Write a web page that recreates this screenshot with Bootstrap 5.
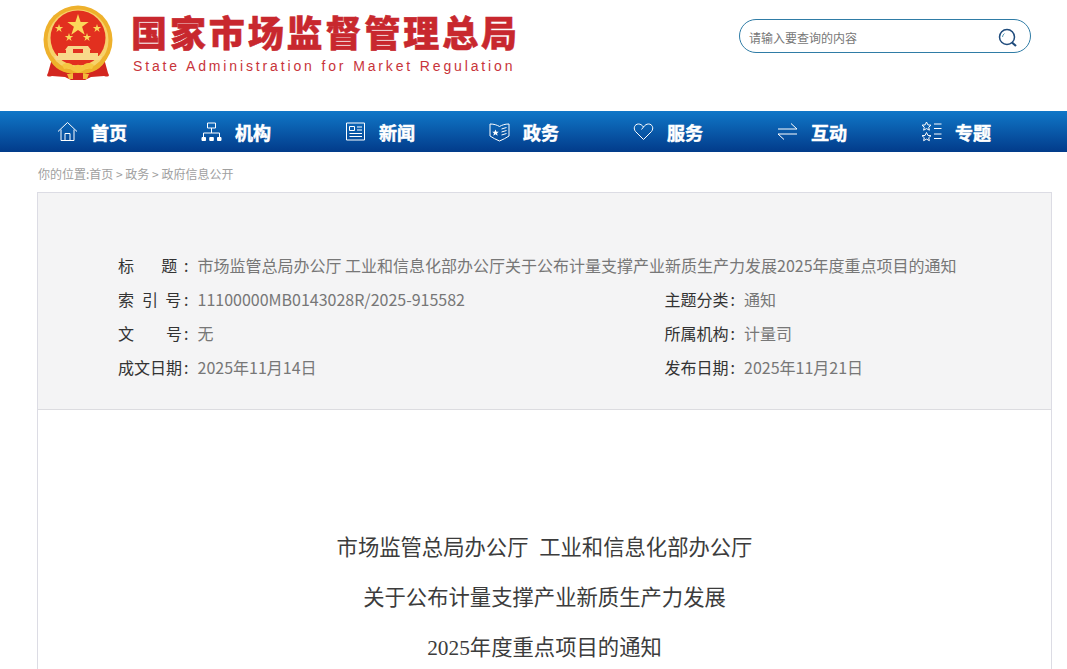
<!DOCTYPE html>
<html lang="zh-CN">
<head>
<meta charset="UTF-8">
<meta name="viewport" content="width=device-width, initial-scale=1.0">
<title>市场监管总局办公厅 工业和信息化部办公厅关于公布计量支撑产业新质生产力发展2025年度重点项目的通知</title>
<link href="https://cdn.jsdelivr.net/npm/bootstrap@5.3.3/dist/css/bootstrap.min.css" rel="stylesheet">
<style>
body { font-family: "Noto Sans CJK SC", "Noto Sans", sans-serif; color: #333; background: #fff; }
.site-head { height: 111px; padding-left: 43px; padding-right: 36px; }
.emblem { width: 70px; height: 76px; margin-top: 5px; flex: none; }
.brand { margin-left: 18px; margin-top: 8px; }
.brand-cn { font-size: 36px; line-height: 46px; font-weight: 900; color: #c8282e; letter-spacing: 2.9px; white-space: nowrap; -webkit-text-stroke: .5px #c8282e; }
.brand-en { font-family: "Liberation Sans", sans-serif; font-size: 14px; line-height: 18px; color: #c8343a; letter-spacing: 2.86px; margin-top: 3px; margin-left: 2px; white-space: nowrap; }
.search-box { width: 292px; height: 34px; margin-top: 19px; border: 1px solid #2f7ca6; border-radius: 17px; padding: 3px 12px 0 10px; }
.search-box input { border: 0; outline: 0; background: transparent; font-size: 12px; color: #777; flex: 1; min-width: 0; padding: 0; margin-left: -1px; }
.search-box input::placeholder { color: #777; opacity: 1; }
.main-nav { height: 41px; padding-left: 34px; background: linear-gradient(#1077c8, #023b8a); }
.main-nav a { width: 144px; padding-left: 23px; padding-top: 2px; color: #fff; font-size: 18px; font-weight: 700; text-decoration: none; gap: 13px; -webkit-text-stroke: .5px #fff; }
.main-nav svg { width: 21px; height: 21px; flex: none; fill: none; stroke: #fff; stroke-width: 1; margin-top: -2px; }
.crumb { height: 40px; padding-left: 38px; font-size: 12px; line-height: 44px; color: #a0a0a0; }
.doc-panel { margin: 0 15px 0 37px; border: 1px solid #dcdce4; border-bottom: 0; min-height: 520px; }
.meta-box { background: #f4f4f5; border-bottom: 1px solid #dcdce0; padding: 55px 80px 25px; }
.meta-line { line-height: 34px; font-size: 16px; color: #777; }
.meta-cell { display: flex; white-space: nowrap; }
.meta-cell.left { width: 546.5px; }
.meta-key { width: 79.5px; flex: none; color: #333; position: relative; }
.meta-key::after { content: ":"; position: absolute; left: 66px; }
.doc-title { margin-top: 113px; text-align: center; font-family: "Liberation Serif", "Noto Sans CJK SC", serif; font-size: 21.33px; line-height: 50px; color: #3c3c3c; font-weight: 400; white-space: pre-wrap; }
</style>
</head>
<body>
<header class="site-head d-flex justify-content-between">
  <div class="d-flex">
    <svg class="emblem" viewBox="0 0 70 76">
      <path d="M10 50 L5 68 Q2 73 9 71 L22 72 L28 75 H42 L48 72 L61 71 Q68 73 65 68 L60 50Z" fill="#d3261f"/>
      <circle cx="35" cy="35" r="34.500" fill="#eeb12c"/>
      <circle cx="35" cy="35" r="30.500" fill="#f7d26a"/>
      <circle cx="35" cy="33" r="27.500" fill="#e2301f"/>
      <path d="M35 9l2.600 8h8.100l-6.600 4.800 2.600 8-6.700-4.900-6.700 4.900 2.600-8-6.600-4.800h8.100z" fill="#fbd75a"/>
      <path d="M16 19l1 3h3.200l-2.600 1.900 1 3-2.600-1.900-2.600 1.900 1-3-2.600-1.900h3.200zM54 19l1 3h3.200l-2.600 1.900 1 3-2.600-1.900-2.600 1.900 1-3-2.600-1.900h3.200zM26 28l1 3h3.200l-2.600 1.900 1 3-2.600-1.900-2.600 1.900 1-3-2.600-1.900h3.200zM44 28l1 3h3.200l-2.600 1.900 1 3-2.600-1.900-2.600 1.900 1-3-2.600-1.900h3.200z" fill="#fbd75a"/>
      <path d="M25 41h20l3 4H22zM23 45h24v3H23zM15 48h40v3H15zM11 51h48l-2 4H13z" fill="#f8d88a"/>
      <path d="M30 44h10v4H30z" fill="#e2301f"/>
      <path d="M8 52c4 10 14 15 27 15s23-5 27-15" fill="none" stroke="#eeb12c" stroke-width="4"/>
      <path d="M19 60c4-3 9-3 12 2 2-3 6-3 8 0 3-5 8-5 12-2l-2 4c-3-1-7-1-9 2l-5 2-5-2c-2-3-6-3-9-2z" fill="#f5c842"/>
      <path d="M24 69h22l-2 5H26z" fill="#f3b93a"/>
      <path d="M30 68h10v6H30z" fill="#d3261f"/>
    </svg>
    <div class="brand">
      <div class="brand-cn">国家市场监督管理总局</div>
      <div class="brand-en">State Administration for Market Regulation</div>
    </div>
  </div>
  <form class="search-box d-flex align-items-center">
    <input type="text" placeholder="请输入要查询的内容">
    <svg width="20" height="20" viewBox="0 0 20 20" fill="none" stroke="#1f4b7c">
      <circle cx="9" cy="9" r="7.500" stroke-width="1.500"/>
      <path d="M14 14.500l4 3.500" stroke-width="2.200"/>
      <path d="M4.500 9a4.500 4.500 0 0 1 2-3.500" stroke="#5a9bb8"/>
    </svg>
  </form>
</header>

<nav class="main-nav d-flex">
  <a class="d-flex align-items-center" href="#">
    <svg viewBox="0 0 21 21"><path d="M1 10.500L10.500 1.500 20 10.500M4 8.500V19.500H17V8.500M8 19.500V12.500H13V19.500"/></svg>首页</a>
  <a class="d-flex align-items-center" href="#">
    <svg viewBox="0 0 21 21"><path d="M6.500 2h8v5h-8zM10.500 7v5M2.500 16v-4h16v4"/><path d="M1 16.500h3.500v3H1zM8.800 16.500h3.500v3H8.800zM16.500 16.500H20v3h-3.500z" fill="#fff"/></svg>机构</a>
  <a class="d-flex align-items-center" href="#">
    <svg viewBox="0 0 21 21"><path d="M1.500 2h18v17h-18zM4.500 5.500h5v4h-5zM12 6h5M12 9h5M4.500 12.500h12.500M4.500 15.500h12.500"/></svg>新闻</a>
  <a class="d-flex align-items-center" href="#">
    <svg viewBox="0 0 21 21"><path d="M1 3c4 0 7 1 9.500 2.500C13 4 16 3 20 3v12c-3 2-6 3.500-9.500 5C7 18.500 4 17 1 15zM12.500 8l5-1.500M12.500 11l5-1.500M12.500 14l5-1.500"/><path d="M6.500 8.500l1 2.300h2.300l-1.800 1.500.7 2.400-2.200-1.400-2.200 1.400.7-2.400-1.800-1.500h2.300z" fill="#fff" stroke="none"/></svg>政务</a>
  <a class="d-flex align-items-center" href="#">
    <svg viewBox="0 0 21 21"><path d="M10.500 18.500L2.500 10.500C0 7.500 1.500 3 5.500 3c2 0 3.500 1 5 3l-2 2.500M10.500 18.500l8-8c2.500-3 1-7.500-3-7.500-2 0-3.500 1-5 3"/></svg>服务</a>
  <a class="d-flex align-items-center" href="#">
    <svg viewBox="0 0 21 21"><path d="M1 8h19L14 2.500M20 13H1l6 5.500"/></svg>互动</a>
  <a class="d-flex align-items-center" href="#">
    <svg viewBox="0 0 21 21"><path d="M5.500 1l1.400 2.900 3.100.3-2.300 2 .7 3-2.900-1.600-2.900 1.600.7-3-2.300-2 3.100-.3zM5.500 11.500l1.400 2.900 3.100.3-2.300 2 .7 3-2.900-1.600-2.900 1.600.7-3-2.300-2 3.100-.3zM13 3h7.500M13 7.500h7.500M13 13h7.500M13 17.500h7.500"/></svg>专题</a>
</nav>

<div class="crumb">你的位置:首页 &gt; 政务 &gt; 政府信息公开</div>

<main class="doc-panel">
  <section class="meta-box">
    <div class="meta-line meta-cell"><span class="meta-key">标&emsp;&ensp;&thinsp;题</span>市场监管总局办公厅 工业和信息化部办公厅关于公布计量支撑产业新质生产力发展2025年度重点项目的通知</div>
    <div class="meta-line d-flex">
      <div class="meta-cell left"><span class="meta-key">索&ensp;引&nbsp;&nbsp;号</span>11100000MB0143028R/2025-915582</div>
      <div class="meta-cell"><span class="meta-key">主题分类</span>通知</div>
    </div>
    <div class="meta-line d-flex">
      <div class="meta-cell left"><span class="meta-key">文&emsp;&emsp;号</span>无</div>
      <div class="meta-cell"><span class="meta-key">所属机构</span>计量司</div>
    </div>
    <div class="meta-line d-flex">
      <div class="meta-cell left"><span class="meta-key">成文日期</span>2025年11月14日</div>
      <div class="meta-cell"><span class="meta-key">发布日期</span>2025年11月21日</div>
    </div>
  </section>
  <h1 class="doc-title">市场监管总局办公厅  工业和信息化部办公厅
关于公布计量支撑产业新质生产力发展
2025年度重点项目的通知</h1>
</main>
<script src="https://cdn.jsdelivr.net/npm/bootstrap@5.3.3/dist/js/bootstrap.bundle.min.js"></script>
</body>
</html>
